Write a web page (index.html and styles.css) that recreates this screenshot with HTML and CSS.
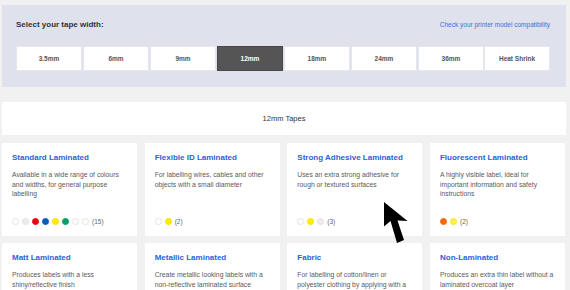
FILE: index.html
```html
<!DOCTYPE html>
<html lang="en">
<head>
    <meta charset="UTF-8">
    <meta name="viewport" content="width=device-width, initial-scale=1.0">
    <title>Tape Selector</title>
    <link rel="stylesheet" href="styles.css">
</head>
<body>
    <div class="page">
        <div class="width-panel">
            <div class="width-head">
                <h2 class="width-title">Select your tape width:</h2>
                <a class="compat-link" href="#">Check your printer model compatibility</a>
            </div>
            <div class="width-options">
                <div class="width-group">
                    <button class="width-btn">3.5mm</button>
                    <button class="width-btn">6mm</button>
                    <button class="width-btn">9mm</button>
                    <button class="width-btn active">12mm</button>
                    <button class="width-btn">18mm</button>
                    <button class="width-btn">24mm</button>
                    <button class="width-btn">36mm</button>
                </div>
                <button class="width-btn">Heat Shrink</button>
            </div>
        </div>

        <div class="tapes-heading">12mm Tapes</div>

        <div class="tape-grid">
            <div class="tape-card">
                <a class="tape-name" href="#">Standard Laminated</a>
                <p class="tape-desc">Available in a wide range of colours and widths, for general purpose labelling</p>
                <div class="swatches">
                    <span class="swatch white"></span>
                    <span class="swatch grey"></span>
                    <span class="swatch red"></span>
                    <span class="swatch blue"></span>
                    <span class="swatch yellow"></span>
                    <span class="swatch green"></span>
                    <span class="swatch white"></span>
                    <span class="swatch white"></span>
                    <span class="swatch-count">(15)</span>
                </div>
            </div>
            <div class="tape-card">
                <a class="tape-name" href="#">Flexible ID Laminated</a>
                <p class="tape-desc">For labelling wires, cables and other objects with a small diameter</p>
                <div class="swatches">
                    <span class="swatch white"></span>
                    <span class="swatch yellow"></span>
                    <span class="swatch-count">(2)</span>
                </div>
            </div>
            <div class="tape-card">
                <a class="tape-name" href="#">Strong Adhesive Laminated</a>
                <p class="tape-desc">Uses an extra strong adhesive for rough or textured surfaces</p>
                <div class="swatches">
                    <span class="swatch white"></span>
                    <span class="swatch yellow"></span>
                    <span class="swatch grey"></span>
                    <span class="swatch-count">(3)</span>
                </div>
            </div>
            <div class="tape-card">
                <a class="tape-name" href="#">Fluorescent Laminated</a>
                <p class="tape-desc">A highly visible label, ideal for important information and safety instructions</p>
                <div class="swatches">
                    <span class="swatch orange"></span>
                    <span class="swatch pale-yellow"></span>
                    <span class="swatch-count">(2)</span>
                </div>
            </div>
            <div class="tape-card">
                <a class="tape-name" href="#">Matt Laminated</a>
                <p class="tape-desc">Produces labels with a less shiny/reflective finish</p>
            </div>
            <div class="tape-card">
                <a class="tape-name" href="#">Metallic Laminated</a>
                <p class="tape-desc">Create metallic looking labels with a non-reflective laminated surface</p>
            </div>
            <div class="tape-card">
                <a class="tape-name" href="#">Fabric</a>
                <p class="tape-desc">For labelling of cotton/linen or polyester clothing by applying with a heat press</p>
            </div>
            <div class="tape-card">
                <a class="tape-name" href="#">Non-Laminated</a>
                <p class="tape-desc">Produces an extra thin label without a laminated overcoat layer</p>
            </div>
        </div>
    </div>

    <svg class="cursor" width="30" height="46" viewBox="0 0 30 46">
        <path d="M1 1 L1 25.5 L7.5 20 L14 42 L21 39 L14.5 19.5 L24.5 20 Z" fill="#000"/>
    </svg>
</body>
</html>
```

FILE: styles.css
```css
html, body {
    overflow: hidden;
}
body {
    margin: 0;
    font-family: "Liberation Sans", Arial, sans-serif;
    background-color: #f1f1f1;
    color: #444;
}
.page {
    padding: 5px 4px 0 2px;
}
.width-panel {
    background-color: #dfe1ec;
    height: 82px;
    box-sizing: border-box;
    padding: 15px 16px 0 14px;
}
.width-head {
    display: flex;
    justify-content: space-between;
    align-items: baseline;
}
.width-title {
    margin: 0;
    font-size: 8px;
    font-weight: bold;
    color: #333;
}
.compat-link {
    font-size: 6.5px;
    color: #3d6fd6;
    text-decoration: none;
}
.width-options {
    display: flex;
    justify-content: space-between;
    margin-top: 17px;
}
.width-group {
    display: flex;
    gap: 1px;
}
.width-btn {
    width: 66px;
    height: 25px;
    margin: 0;
    padding: 0;
    border: 1px solid #e6e7ee;
    background-color: #fff;
    font-family: inherit;
    font-size: 6.5px;
    font-weight: bold;
    color: #555;
}
.width-btn.active {
    background-color: #555;
    border-color: #484848;
    color: #fff;
}
.tapes-heading {
    margin-top: 15px;
    height: 33px;
    display: flex;
    align-items: center;
    justify-content: center;
    background-color: #fff;
    font-size: 7.5px;
    color: #333;
}
.tape-grid {
    display: grid;
    grid-template-columns: repeat(4, 135px);
    justify-content: space-between;
    row-gap: 7px;
    margin-top: 8px;
    margin-right: 1px;
}
.tape-card {
    background-color: #fff;
    height: 93px;
    box-sizing: border-box;
    padding: 10px 10px 11px 10px;
    display: flex;
    flex-direction: column;
}
.tape-name {
    font-size: 8px;
    font-weight: bold;
    color: #2b5fd9;
    text-decoration: none;
}
.tape-desc {
    margin: 8px 0 0;
    font-size: 6.8px;
    line-height: 9.7px;
    color: #5a5a5a;
}
.swatches {
    margin-top: auto;
    display: flex;
    align-items: center;
    gap: 3px;
}
.swatch {
    width: 7px;
    height: 7px;
    box-sizing: border-box;
    border-radius: 50%;
    border: 1px solid #e2e2e2;
}
.swatch.white { background-color: #fff; }
.swatch.grey { background-color: #ececec; }
.swatch.red { background-color: #e30613; border-color: #e30613; }
.swatch.blue { background-color: #0b5cb5; border-color: #0b5cb5; }
.swatch.yellow { background-color: #ffed00; border-color: #f4e200; }
.swatch.green { background-color: #00a06a; border-color: #00a06a; }
.swatch.orange { background-color: #f26a10; border-color: #f26a10; }
.swatch.pale-yellow { background-color: #fff04a; border-color: #f4e23a; }
.swatch-count {
    font-size: 6.5px;
    color: #666;
}
.cursor {
    position: absolute;
    left: 383px;
    top: 201px;
}
```
